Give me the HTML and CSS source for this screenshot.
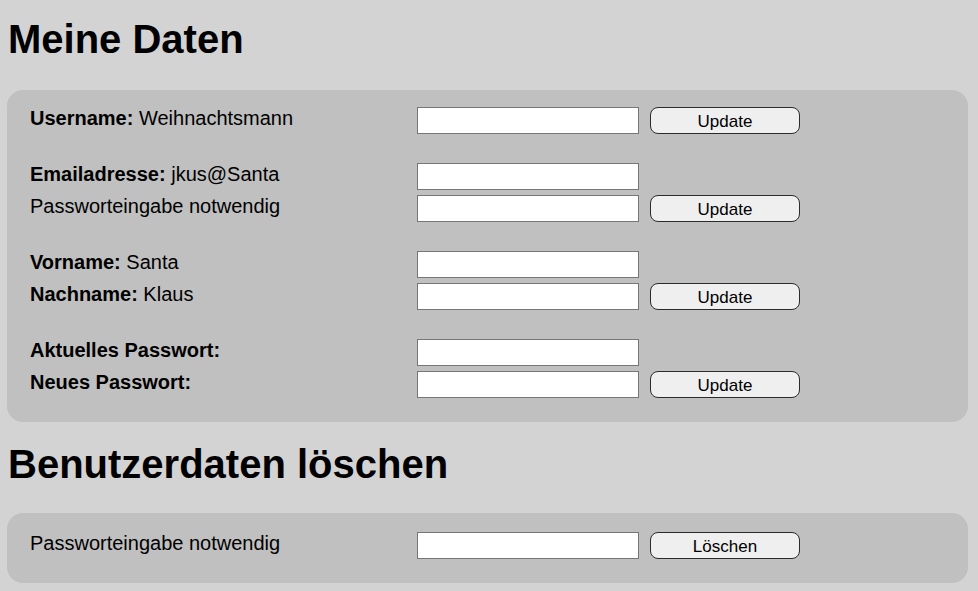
FILE: index.html
```html
<!DOCTYPE html>
<html>
	<head>
		<meta charset="UTF-8">
		<title>Meine Daten</title>
		<link rel="stylesheet" href="styles.css">
	</head>
	<body>
		<h1 class="title first">Meine Daten</h1>
		<div class="panel">
			<form class="group" action="" method="post">
				<div class="row">
					<span class="label"><b>Username:</b> Weihnachtsmann</span>
					<input type="text" class="field" />
					<input type="button" class="btn" value="Update" />
				</div>
			</form>
			<form class="group" action="" method="post">
				<div class="row">
					<span class="label"><b>Emailadresse:</b> jkus@Santa</span>
					<input type="text" class="field" />
				</div>
				<div class="row">
					<span class="label">Passworteingabe notwendig</span>
					<input type="password" class="field" />
					<input type="button" class="btn" value="Update" />
				</div>
			</form>
			<form class="group" action="" method="post">
				<div class="row">
					<span class="label"><b>Vorname:</b> Santa</span>
					<input type="text" class="field" />
				</div>
				<div class="row">
					<span class="label"><b>Nachname:</b> Klaus</span>
					<input type="text" class="field" />
					<input type="button" class="btn" value="Update" />
				</div>
			</form>
			<form class="group" action="" method="post">
				<div class="row">
					<span class="label"><b>Aktuelles Passwort:</b></span>
					<input type="password" class="field" />
				</div>
				<div class="row">
					<span class="label"><b>Neues Passwort:</b></span>
					<input type="password" class="field" />
					<input type="button" class="btn" value="Update" />
				</div>
			</form>
		</div>
		<h1 class="title second">Benutzerdaten löschen</h1>
		<div class="panel low">
			<form class="group" action="" method="post">
				<div class="row">
					<span class="label">Passworteingabe notwendig</span>
					<input type="password" class="field" />
					<input type="button" class="btn" value="Löschen" />
				</div>
			</form>
		</div>
	</body>
</html>
```

FILE: styles.css
```css
body{
	margin: 0 10px 0 7px;
	background-color: #d3d3d3;
	font: 20px/23px "Liberation Sans", Arial, sans-serif;
	color: #000;
}
.title{
	font-size: 40px;
	line-height: 46px;
	font-weight: bold;
	margin: 0 0 0 1px;
}
.first{
	padding-top: 16px;
	margin-bottom: 28px;
}
.second{
	margin-top: 19px;
	margin-bottom: 26px;
}
.panel{
	display: flex;
	flex-direction: column;
	gap: 29px;
	background-color: #c0c0c0;
	border-radius: 16px;
	padding: 17px 23px 24px;
}
.low{
	padding-top: 19px;
}
.group{
	display: flex;
	flex-direction: column;
	gap: 5px;
	margin: 0;
}
.row{
	display: grid;
	grid-template-columns: 387px 233px 150px;
	align-items: start;
}
.label b{
	font-weight: bold;
}
.field{
	box-sizing: border-box;
	width: 222px;
	height: 27px;
	margin: 0;
	border: 1px solid #767676;
	background: #fff;
	padding: 0 4px;
	font: 16px "Liberation Sans", Arial, sans-serif;
}
.btn{
	box-sizing: border-box;
	width: 150px;
	height: 27px;
	margin: 0;
	border: 1px solid #2b2b2b;
	border-radius: 8px;
	background-color: #efefef;
	color: #000;
	font: 17px/17px "Liberation Sans", Arial, sans-serif;
	padding: 2px 0 0;
}
```
